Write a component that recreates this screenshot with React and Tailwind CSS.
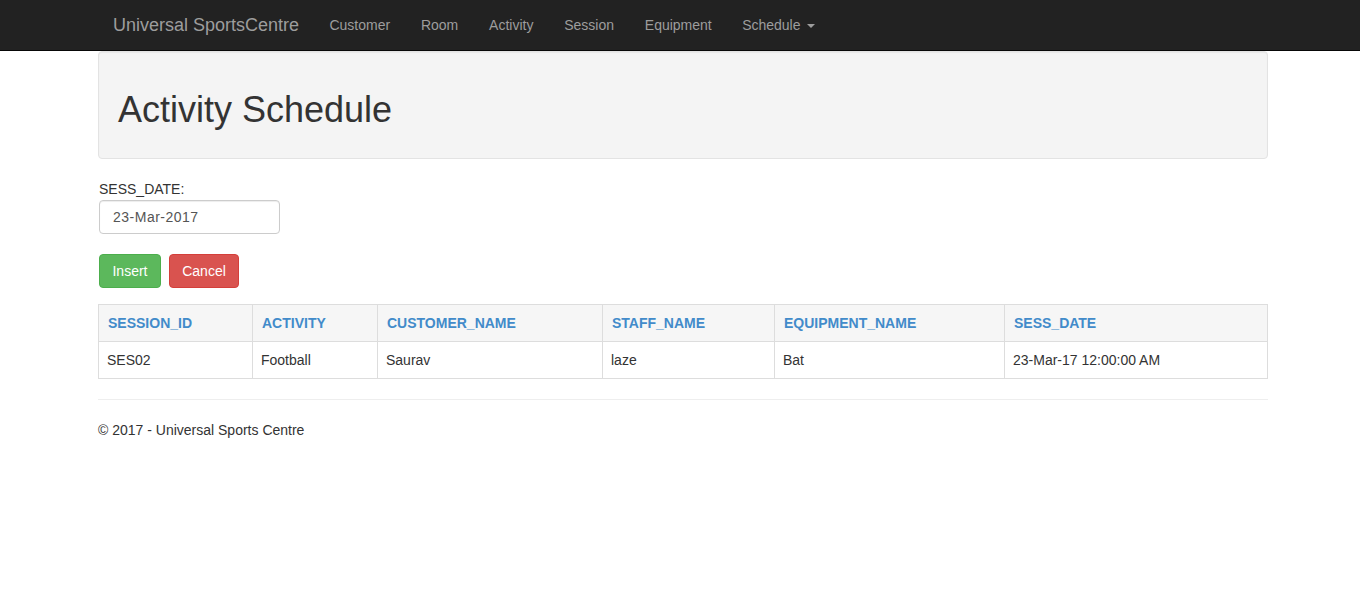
const navLinks = ["Customer", "Room", "Activity", "Session", "Equipment"];

const columns = [
  { key: "id", label: "SESSION_ID", w: "w-[154px]" },
  { key: "activity", label: "ACTIVITY", w: "w-[125px]" },
  { key: "customer", label: "CUSTOMER_NAME", w: "w-[225px]" },
  { key: "staff", label: "STAFF_NAME", w: "w-[172px]" },
  { key: "equipment", label: "EQUIPMENT_NAME", w: "w-[230px]" },
  { key: "date", label: "SESS_DATE", w: "" },
];

const rows = [
  {
    id: "SES02",
    activity: "Football",
    customer: "Saurav",
    staff: "laze",
    equipment: "Bat",
    date: "23-Mar-17 12:00:00 AM",
  },
];

const App = () => {
  return (
    <div className="min-h-screen bg-white font-['Liberation_Sans',Arial,sans-serif] text-[14px] leading-[20px] text-[#333]">
      <nav className="h-[51px] border-b border-[#080808] bg-[#222]">
        <div className="ml-[98px] flex h-[50px] w-[1170px] items-center">
          <span className="px-[15px] text-[18px] text-[#9d9d9d]">
            Universal SportsCentre
          </span>
          {navLinks.map((link) => (
            <span key={link} className="px-[15.4px] text-[#9d9d9d]">
              {link}
            </span>
          ))}
          <span className="flex items-center px-[15px] text-[#9d9d9d]">
            Schedule
            <span className="ml-[6px] mt-[1px] h-0 w-0 border-x-[4px] border-t-[4px] border-x-transparent border-t-[#9d9d9d]" />
          </span>
        </div>
      </nav>

      <div className="ml-[98px] w-[1170px]">
        <div className="h-[108px] rounded-[4px] border border-[#e3e3e3] bg-[#f4f4f4] px-[19px] pt-[38px] shadow-[inset_0_1px_1px_rgba(0,0,0,0.05)]">
          <h1 className="text-[36px] leading-[40px] text-[#333]">
            Activity Schedule
          </h1>
        </div>

        <div className="mt-[21px] pl-[1px]">
          <label className="block leading-[18px]">SESS_DATE:</label>
          <input
            className="mt-[2px] h-[34px] w-[181px] rounded-[4px] border border-[#ccc] px-[13px] tracking-[0.5px] text-[#555] shadow-[inset_0_1px_1px_rgba(0,0,0,0.075)]"
            defaultValue="23-Mar-2017"
          />
          <div className="mt-[20px] flex gap-[8px]">
            <button className="h-[34px] w-[62px] rounded-[4px] border border-[#4cae4c] bg-[#5cb85c] text-white">
              Insert
            </button>
            <button className="h-[34px] w-[70px] rounded-[4px] border border-[#d43f3a] bg-[#d9534f] text-white">
              Cancel
            </button>
          </div>
        </div>

        <table className="mt-[16px] w-full border-collapse border border-[#ddd]">
          <thead>
            <tr className="bg-[#f6f6f6]">
              {columns.map((c) => (
                <th
                  key={c.key}
                  className={`${c.w} h-[37px] border border-[#ddd] px-[9px] text-left font-bold text-[#428bca]`}
                >
                  {c.label}
                </th>
              ))}
            </tr>
          </thead>
          <tbody>
            {rows.map((r) => (
              <tr key={r.id}>
                {columns.map((c) => (
                  <td
                    key={c.key}
                    className="h-[37px] border border-[#ddd] px-[8px]"
                  >
                    {r[c.key]}
                  </td>
                ))}
              </tr>
            ))}
          </tbody>
        </table>

        <hr className="mt-[20px] border-t border-[#eee]" />
        <footer className="mt-[20px]">© 2017 - Universal Sports Centre</footer>
      </div>
    </div>
  );
};

export default App;
